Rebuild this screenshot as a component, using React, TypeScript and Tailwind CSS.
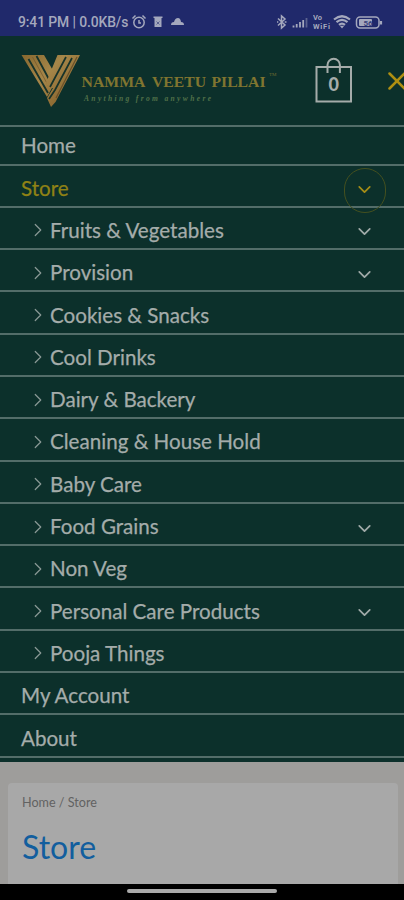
import React from 'react';
import { ChevronDown, ChevronRight, X } from 'lucide-react';

type MenuItem = {
  label: string;
  sub?: boolean;
  expandable?: boolean;
  active?: boolean;
};

const menuItems: MenuItem[] = [
  { label: 'Store', expandable: true, active: true },
  { label: 'Fruits & Vegetables', sub: true, expandable: true },
  { label: 'Provision', sub: true, expandable: true },
  { label: 'Cookies & Snacks', sub: true },
  { label: 'Cool Drinks', sub: true },
  { label: 'Dairy & Backery', sub: true },
  { label: 'Cleaning & House Hold', sub: true },
  { label: 'Baby Care', sub: true },
  { label: 'Food Grains', sub: true, expandable: true },
  { label: 'Non Veg', sub: true },
  { label: 'Personal Care Products', sub: true, expandable: true },
  { label: 'Pooja Things', sub: true },
  { label: 'My Account' },
  { label: 'About' },
];

function StatusBar() {
  return (
    <div className="h-9 shrink-0 bg-[#20296b] text-[#a4a8bd] flex items-start justify-between pl-[18px] pr-[21px] pt-[13px]">
      <div className="flex items-center h-[18px]">
        <span className="w-[110px] font-['Roboto',sans-serif] font-medium text-[13.9px] tracking-[-0.1px] leading-[18px] whitespace-nowrap">
          9:41 PM | 0.0KB/s
        </span>
        {/* alarm, trash, cloud */}
        <svg width="56" height="18" viewBox="0 0 56 18" fill="none" stroke="currentColor" strokeWidth="1.5" className="ml-[3px]">
          <circle cx="8" cy="9.5" r="5.2" />
          <path d="M8 7v3h2M1.500 5.500l3-3M14.500 5.500l-3-3" />
          <path d="M22.500 3.500h9V5h-9zM23.500 5h7v9h-7z" fill="currentColor" stroke="none" />
          <path d="M25.500 8.500l3 3m0-3l-3 3" stroke="#59608f" strokeWidth="1" />
          <path d="M40 12q0-3 3-3q1-4 4-4q2.500 0 3 4q3 0 3 3z" fill="currentColor" stroke="none" />
        </svg>
      </div>
      <div className="flex items-center h-[18px]">
        {/* bluetooth, signal */}
        <svg width="36" height="18" viewBox="0 0 36 18" fill="none" stroke="currentColor" strokeWidth="1.500">
          <path d="M1 5.500l7 6.500-3.500 3V3L8 6l-7 6.500M-.5 9h1.800M7.700 9h1.800" />
          <path d="M16.500 14.500v-2M19.700 14.500v-3.500M23 14.500V9M26.200 14.500V7" strokeWidth="1.800" />
          <path d="M29.500 14.500V5" strokeWidth="1.800" opacity=".45" />
        </svg>
        {/* VoWiFi badge */}
        <svg width="20" height="18" viewBox="0 0 20 18" fill="currentColor" className="font-['Roboto',sans-serif] font-bold text-[7.5px]">
          <text x="0" y="6.500">Vo</text>
          <text x="0" y="15.500" textLength="17">WiFi</text>
        </svg>
        {/* wifi, battery */}
        <svg width="50" height="18" viewBox="0 0 50 18" fill="none" stroke="currentColor" strokeWidth="2.200">
          <path d="M1 6.500q8-6.500 16 0M3.500 9.200q5.500-4.500 11 0M6 11.800q3-2.500 6 0" />
          <path d="M9 15.500l-2.200-2.700h4.400z" fill="currentColor" stroke="none" />
          <rect x="23.500" y="4" width="22.500" height="11" rx="3.500" strokeWidth="1.500" />
          <rect x="26" y="6" width="13" height="7" rx="1" fill="currentColor" stroke="none" />
          <path d="M48 8v3.500" />
          <text x="35" y="12.500" textAnchor="middle" fontFamily="Roboto" fontSize="8" fontWeight="700" fill="#39417b" stroke="none">56</text>
        </svg>
      </div>
    </div>
  );
}

function Logo() {
  return (
    <svg width="260" height="56" viewBox="0 0 260 56" className="shrink-0">
      <defs>
        <linearGradient id="gold" gradientUnits="userSpaceOnUse" x1="2" y1="3" x2="46" y2="46">
          <stop offset="0" stopColor="#88682f" />
          <stop offset="0.5" stopColor="#a58649" />
          <stop offset="1" stopColor="#8b672f" />
        </linearGradient>
      </defs>
      {/* left strokes, then the right ones crossing over them */}
      <path d="M1.500 3H24l9 15.500L28.500 30 32 36l-5 9z" fill="url(#gold)" />
      <path d="M8.500 7l19.500 34M16.500 4l15 28" stroke="#17332a" strokeWidth="1.800" />
      <path d="M12.500 5l16.500 30" stroke="#765b2e" strokeWidth=".8" />
      <path d="M37.500 3H60L35.500 50 31 55l-4-9 6-10h-4l-3-5z" fill="url(#gold)" />
      <path d="M46 5L30 35M52 6L35 38l-6 9" fill="none" stroke="#17332a" strokeWidth="1.700" />
      <path d="M57 5L36 46" stroke="#69502a" strokeWidth="1.200" />
      <g fontFamily="Liberation Serif" fontWeight="700" fontSize="14.500" fill="#807530">
        <text x="61.500" y="35" textLength="64" lengthAdjust="spacingAndGlyphs">NAMMA</text>
        <text x="132" y="35" textLength="54" lengthAdjust="spacingAndGlyphs">VEETU</text>
        <text x="191.500" y="35" textLength="54" lengthAdjust="spacingAndGlyphs">PILLAI</text>
      </g>
      <text x="249" y="24" fontFamily="Liberation Serif" fontSize="5" fill="#716a30">TM</text>
      <text x="64" y="48.500" textLength="127" fontFamily="Liberation Serif" fontStyle="italic" fontWeight="700" fontSize="7.500" fill="#517049">Anything from anywhere</text>
    </svg>
  );
}

function Header() {
  return (
    <div className="h-[89px] shrink-0 flex items-start overflow-hidden pl-5 pt-4">
      <Logo />
      {/* cart */}
      <svg width="42" height="52" viewBox="0 0 42 52" fill="none" stroke="#a5acaa" strokeWidth="2" className="ml-[33px] mt-[3px] shrink-0">
        <path d="M3.500 12h34.500v34.500H3.500zM14.500 18v-8a6.200 6.200 0 0 1 12.400 0v8" />
        <text x="20.700" y="35.500" textAnchor="middle" fontFamily="Lato" fontWeight="900" fontSize="18" fill="#a5acaa" stroke="none">0</text>
      </svg>
      <X size={30} strokeWidth={2} className="text-[#ae8f12] ml-[27px] mt-[14px] shrink-0" />
    </div>
  );
}

function MenuRow({ item }: { item: MenuItem }) {
  return (
    <div className="h-[42.31px] border-b-2 border-[#536d69] flex items-center pl-[21px] pr-[29px]">
      {item.sub && <ChevronRight size={22} strokeWidth={1.3} className="ml-[6px] mr-[1px] mt-[5px] text-[#8a9996]" />}
      <span className={item.active ? 'pt-[4px] text-[#908215]' : 'pt-[4px]'}>{item.label}</span>
      {item.expandable && (
        <div className="relative ml-auto mt-[8px]">
          <ChevronDown size={21} strokeWidth={2} className={item.active ? 'text-[#a58d16]' : 'text-[#a0aaa8]'} />
          {item.active && (
            <div className="absolute -left-[10px] -top-[11px] w-[42px] h-[45px] rounded-full border border-[#44501f]" />
          )}
        </div>
      )}
    </div>
  );
}

function App() {
  return (
    <div className="w-[404px] h-[900px] flex flex-col overflow-hidden bg-[#0c302b] font-['Lato',sans-serif]">
      <StatusBar />
      <Header />
      <div className="h-[636.5px] shrink-0 text-[20.6px] leading-[28px] text-[#a4acaa] [-webkit-text-stroke:0.25px]">
        <div className="h-[40.5px] border-y-2 border-[#536d69] flex items-center pl-[21px]">Home</div>
        {menuItems.map((item) => (
          <MenuRow key={item.label} item={item} />
        ))}
      </div>

      {/* store page behind the menu */}
      <div className="h-[122.5px] shrink-0 bg-[#9e9d9b] pt-[21px] pl-2 pr-[6px]">
        <div className="h-full rounded-t bg-[#a8a8a8] pl-[14px] pt-3">
          <div className="text-[12.6px] leading-4 text-[#626262]">Home / Store</div>
          <h1 className="mt-4 text-[32px] leading-[40px] text-[#125e9e]">Store</h1>
        </div>
      </div>

      {/* gesture bar */}
      <div className="h-4 shrink-0 bg-black flex justify-center pt-[5px]">
        <div className="w-[150px] h-1 rounded-full bg-[#aaaaaa]" />
      </div>
    </div>
  );
}

export default App;
